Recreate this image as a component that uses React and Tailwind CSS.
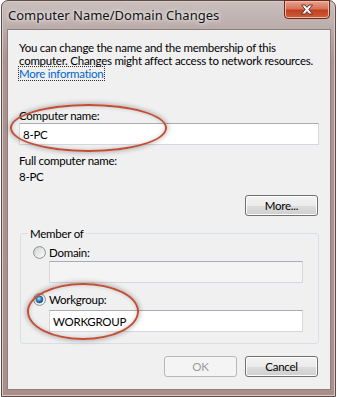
import React from "react";

const RadioIcon = ({ checked }) => (
  <svg width="13" height="13" viewBox="0 0 13 13" className="shrink-0">
    <defs>
      <linearGradient id={checked ? "rgOn" : "rgOff"} x1="0" y1="0" x2="1" y2="1">
        <stop offset="0" stopColor="#cfd0d2" />
        <stop offset="1" stopColor="#ffffff" />
      </linearGradient>
      <radialGradient id="dot" cx="0.4" cy="0.35" r="0.7">
        <stop offset="0" stopColor="#b8ecff" />
        <stop offset="0.5" stopColor="#2f8fd4" />
        <stop offset="1" stopColor="#0b3f74" />
      </radialGradient>
    </defs>
    <circle cx="6.5" cy="6.5" r="5.9" fill={`url(#${checked ? "rgOn" : "rgOff"})`} stroke="#8c8e90" strokeWidth="1" />
    {checked && <circle cx="6.5" cy="6.5" r="3.4" fill="url(#dot)" stroke="#1c4f80" strokeWidth="0.6" />}
  </svg>
);

const CloseIcon = () => (
  <svg width="14" height="11" viewBox="0 0 14 11">
    <path
      d="M1.5 1 H5 L7 3.4 L9 1 H12.5 L8.8 5.5 L12.5 10 H9 L7 7.6 L5 10 H1.5 L5.2 5.5 Z"
      fill="#ffffff"
      stroke="#4a2a24"
      strokeWidth="0.9"
      strokeLinejoin="round"
    />
  </svg>
);

function WinButton({ children, disabled }) {
  return (
    <button
      disabled={disabled}
      className={`w-[73px] h-[21px] rounded-[3px] border leading-none ${
        disabled
          ? "border-[#b5b8ba] bg-[#f4f4f4] text-[#9a9a9a]"
          : "border-[#707070] bg-[linear-gradient(#f2f2f2_0%,#ebebeb_50%,#dddddd_51%,#cfcfcf_100%)] text-black shadow-[inset_0_0_0_1px_#fcfcfc]"
      }`}
    >
      {children}
    </button>
  );
}

function TextBox({ value, disabled, width }) {
  return (
    <div
      className={`${width} h-[22px] border border-[#d4d8de] border-t-[#a9acb2] flex items-center px-[3px] ${
        disabled ? "bg-[#f4f4f4]" : "bg-white"
      }`}
    >
      {value}
    </div>
  );
}

export default function App() {
  return (
    <div className="relative w-[337px] h-[397px] bg-white pl-[1px] font-['Lato',sans-serif] text-black">
      <div className="w-[335px] h-[397px] flex flex-col rounded-t-[7px] border border-[#5e4a47] bg-[linear-gradient(#c9bfbd_0%,#b9aaa7_30px,#ad938f_60px,#aa8e8a_100%)] shadow-[inset_0_0_0_1px_#d9cac7]">
        {/* title bar */}
        <div className="h-[28px] flex justify-between">
          <div className="pl-[6px] pt-[6px] font-['Noto_Sans',sans-serif] text-[13px] leading-[16px] text-[#111] [text-shadow:0_0_6px_#eee,0_0_3px_#f4f4f4]">
            Computer Name/Domain Changes
          </div>
          <div className="mr-[5px] -mt-[1px] w-[46px] h-[19px] rounded-b-[4px] border border-[#6b2a1e] bg-[linear-gradient(#e9a48f_0%,#d8735a_45%,#c2401f_55%,#cf5f3b_100%)] shadow-[inset_0_0_0_1px_#f1b9a8] flex items-center justify-center">
            <CloseIcon />
          </div>
        </div>

        {/* client area */}
        <div className="ml-[5px] w-[324px] h-[361px] border border-[#8d7f7c] bg-[#f0f0f0] flex flex-col text-[11.5px] tracking-[-0.25px] leading-[13px] pl-[11px] pr-[11px]">
          <p className="mt-[11px] whitespace-nowrap">
            You can change the name and the membership of this
            <br />
            computer. Changes might affect access to network resources.
            <br />
            <span className="text-[#0066cc] outline outline-1 outline-dotted outline-[#333]">
              More information
            </span>
          </p>

          <div className="mt-[29px]">Computer name:</div>
          <div className="mt-[1px]">
            <TextBox value="8-PC" width="w-[300px]" />
          </div>

          <div className="mt-[9px]">Full computer name:</div>
          <div className="mt-[3px]">8-PC</div>

          <div className="mt-[12px] flex justify-end pr-[1px]">
            <WinButton>More...</WinButton>
          </div>

          <fieldset className="mt-[11px] ml-[1px] w-[299px] border border-[#d5dfe5] rounded-[3px] pl-[12px] pb-[11px]">
            <legend className="ml-[-5px] px-[2px]">Member of</legend>
            <div className="mt-[6px] flex items-center gap-[3px]">
              <RadioIcon />
              <span>Domain:</span>
            </div>
            <div className="mt-[2px] ml-[16px]">
              <TextBox value="" disabled width="w-[254px]" />
            </div>
            <div className="mt-[10px] flex items-center gap-[3px]">
              <RadioIcon checked />
              <span>Workgroup:</span>
            </div>
            <div className="mt-[4px] ml-[16px]">
              <TextBox value="WORKGROUP" width="w-[254px]" />
            </div>
          </fieldset>

          <div className="mt-[12px] flex justify-end gap-[8px] pr-[1px]">
            <WinButton disabled>OK</WinButton>
            <WinButton>Cancel</WinButton>
          </div>
        </div>
      </div>

      {/* annotation ellipses */}
      <div className="absolute left-[10px] top-[104px] w-[157px] h-[48px] rounded-[50%] border-2 border-[#c24e36] shadow-[0_0_5px_1px_rgba(0,0,0,0.28),inset_0_0_4px_rgba(0,0,0,0.18)]" />
      <div className="absolute left-[27px] top-[283px] w-[112px] h-[57px] rounded-[50%] border-2 border-[#c24e36] shadow-[0_0_5px_1px_rgba(0,0,0,0.28),inset_0_0_4px_rgba(0,0,0,0.18)]" />
    </div>
  );
}
